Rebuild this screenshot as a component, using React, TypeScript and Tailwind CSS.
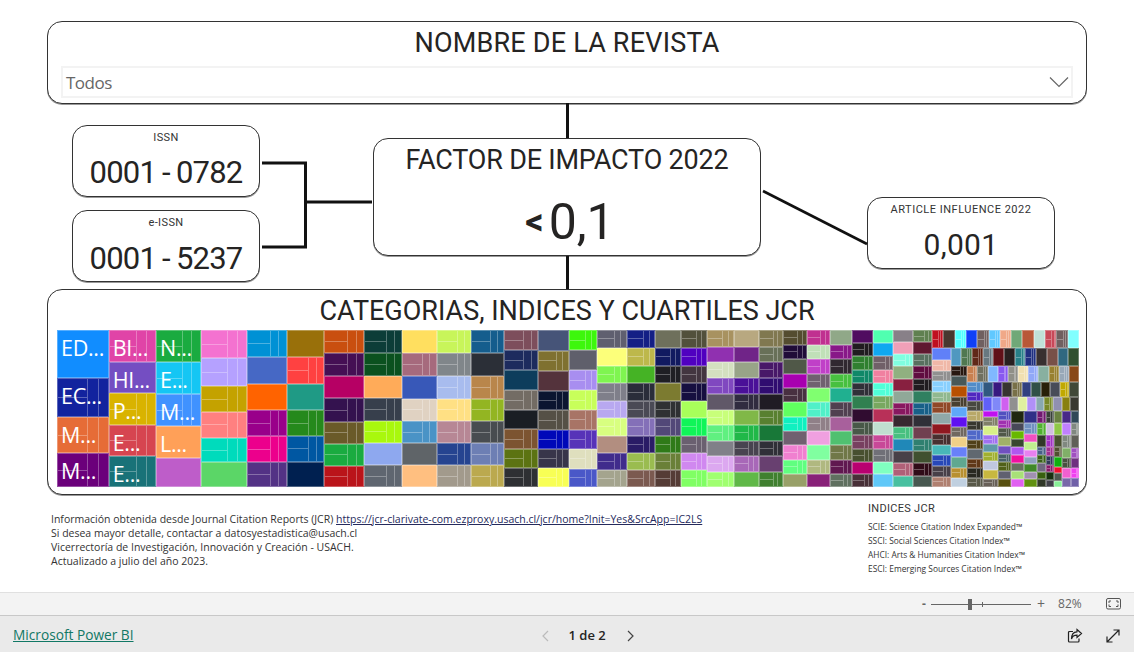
import React from "react";

type Node = { size: number; dir?: "row" | "col"; kids?: Node[]; color?: string; split?: boolean; label?: string };

// "145:118dff.|ED..." -> size:colour, "." = no inner lines, "|x" = label
const parse = (text: string): Node[] =>
  text.split(" ").map((part) => {
    const [body, label] = part.split("|");
    const hasSize = body.includes(":");
    const size = hasSize ? Number(body.split(":")[0]) : 1;
    const raw = hasSize ? body.split(":")[1] : body;
    const plain = raw.endsWith(".");
    return { size, color: "#" + raw.replace(".", ""), split: !plain, label };
  });

const col = (size: number, text: string): Node => ({ size, dir: "col", kids: parse(text) });
const row = (size: number, text: string): Node => ({ size, dir: "row", kids: parse(text) });
const box = (size: number, dir: "row" | "col", ...kids: Node[]): Node => ({ size, dir, kids });

const treemap: Node = box(3066, "row",
  col(155, "145:118dff.|ED... 118:12239e|EC... 106:e66c37|M... 101:6b007b|M..."),
  col(142, "97:e044a7|BI... 93:744ec2.|HI... 95:d9b300|P... 93:d64550|E... 92:197278|E..."),
  col(135, "97:1aab40|N... 96:15c6f4|E... 95:4092ff|M... 94:ffa058.|L... 88:be5dc9."),
  col(137, "85:f472d0 84:b5a1ff 78:c4a200 76:ff8080 74:00dbbc 73:5bd667."),
  col(121, "82:0091d5 80:4668c5. 79:ff6300. 78:99008a 76:ec008c 75:533285"),
  col(112, "80:99700a. 81:ff4141 80:1f9a85. 77:25891c 76:0057a2 76:002050."),
  col(120, "70:c94f0f 68:450f54 67:b60064. 70:34124f 66:6a5a29 65:1aab40 64:ba141a"),
  col(112, "68:0c3d38 69:0b511f 68:ffab59. 67:373f4c 66:a9f80d 67:8ea8ef. 65:5f6670"),
  col(106, "70:ffdf5f. 67:a66a7d 68:3858b8. 67:e0d2c2 66:4a93c6 65:5f6468. 65:ffbf80."),
  col(102, "68:c8f55a 69:80868a 68:a8bcee 67:ffe084 66:b78795 65:264490 65:a29a8c"),
  col(98, "68:155d8d 69:2b2f37. 68:b9864b 67:93b522 66:484c50 65:6d7fb4 65:bba94f"),
  col(103, "60:7d4e5c 61:1d2b5e 59:0d3d5c. 60:736c64 58:1a1e24. 58:7c5431 58:5c7312 56:2e3033"),
  col(93, "62:465478. 61:7f7130 60:54333c. 58:0b1530 60:555046 57:0008b8 56:38354a 56:f8ff55"),
  col(85, "61:3df70c 60:5f5f6b. 59:a88ef0 60:c8ff5a 59:a87466 58:5733b8 58:dfdfbe 55:4a58c8"),
  col(89, "53:5f5f6f 54:fcff7a. 53:7ff550 52:7f7f8a 52:b8a8f0 53:d8ff80 51:b28e80. 51:402c8c 51:a4a48e"),
  col(83, "53:141f85 54:bdb84b 53:45b325. 52:2a2d3a 52:4a4a55 53:8470b8 51:2a1c66 51:9abc50 51:7b5a50"),
  col(79, "53:6e705c. 54:111a60 53:1f1f24 52:7c7b30. 52:2f3133 53:524878 51:2f7a18 51:6a8038 51:553c36"),
  col(77, "53:52503c 54:5000c0 53:433640 52:160f40 52:a8ff5a. 53:10f558 51:6a6070 51:d088f0 51:80ff64"),
  col(82, "50:a89260 45:9030b0. 50:d4e0c0 48:8048c0 46:605868. 46:c8ff7a 47:60f080 46:808088. 46:dca8f0 46:a0ff70"),
  col(75, "50:b8a880. 45:702488. 50:98a488. 48:4a1098 46:302c40 46:80b848. 47:20b848 46:484450 46:a868b8 46:60b848."),
  col(71, "50:807850 45:687058 50:481868 48:300c70 46:201c24. 46:588030 47:187838. 46:303038 46:684070. 46:408030"),
  col(73, "44:544c30 44:200c38 44:505848. 44:a800b0. 42:483040 43:60ff60. 43:10f0c0 43:706070. 43:f080d0 41:60ff80 40:98a068."),
  col(70, "44:c03090 44:c0e0b8 44:c040c8 44:706070 42:80ff70. 43:50f0c8 43:908088 43:f0a0e0. 43:80ffa0. 41:b0b880 40:882078."),
  col(64, "44:90a888. 44:881888 44:302830 44:48c040 42:20b090. 43:504050 43:a8609c. 43:50c070. 43:707848 41:601850 40:607060"),
  col(64, "39:500c60. 39:201c20 39:308030 39:108868 39:303038 39:308050. 39:300c30. 39:485848 39:784060 39:485030 37:b80070. 37:483038"),
  col(61, "39:50ffb0. 39:10a8f0. 39:706068 39:f080a0 39:50ffd8 39:78a860 39:b83058. 39:c0e0d0. 39:c84898 39:707078 37:80ffc0. 37:60c8f8."),
  col(60, "36:888088. 36:f0a0b8. 36:80ffe0 36:90b080. 36:882040. 36:90a898. 36:881860 36:382830. 36:48c080 36:2088b8. 36:484048. 36:b06078 34:48c0a0."),
  col(56, "36:608050 36:601830. 36:587060 36:600c40 36:201c20 36:308060. 36:186088 36:303038. 36:704050. 36:308070 36:405030. 36:300c18 34:485850."),
  box(441, "col",
    row(55, "c01020 483830. 50ffff 1040f8. 706060 60c8ff f0a888 70a878. b85838. c0e0d8. c84858 706060 80ffff."),
    box(415, "row",
      col(56, "35:6080f8. 33:f0b8a8 32:909090 32:88d0ff 32:90b890 32:904828 32:90a8a8. 32:901820. 32:483030 32:48b8b8. 32:2848b8 32:484048 31:b08070"),
      box(385, "col",
        row(52, "5098c0. 507850 602818 687880 601018. 282020. 288088 203080 383030. 785048. 306880. 305030."),
        box(363, "row",
          col(50, "31:281810 31:485858. 31:b85000. 30:484030 30:60a8f8. 30:6010f0. 31:706860 31:f0d088. 30:6880f8. 31:60a890. 30:b89030 27:c0d0e0."),
          box(335, "col",
            row(48, "c88050 707060 80b8ff. 8858f0 909088 f0e0b0 90a8f8 88b0a0. 988030 98a8b8 884818."),
            box(315, "row",
              col(48, "30:508cc8 28:5028c0 30:484840 30:b8a868 28:383830 29:5068c8 28:504018 29:606870. 28:603818 28:282820 27:585848"),
              box(287, "col",
                row(45, "305880. 381880. 383430. 787048 304080. 305048. 282008. 484c58. c0a800 404838."),
                row(43, "6060f8. 8088f8. d060f0. 909090. e0f0a0. b090f8. 88a8b0. 788828 9090b0. 888010. 383830."),
                box(227, "row",
                  col(44, "14:c010f0. 28:808068 28:d8f088. 27:a070f0 25:6098a8. 26:a0b030 26:c0c8e0. 28:c8b840. 25:686058"),
                  col(40, "27:5050c0 25:a030b0 25:505848 27:a0b068. 26:7050c0. 24:486068 25:506018 25:606070. 23:585010."),
                  col(38, "37:202810. 25:484858. 25:68b800. 23:384830. 24:b058f0. 23:f010a0. 23:687060. 24:a8e078. 23:e060f0."),
                  col(38, "37:303088. 37:7090c0 23:f050c0. 23:c0f090. 22:e880f0. 20:90a0c0. 22:408828. 20:a090b0. 23:609010."),
                  col(27, "37:701870 37:50b030 38:303828. 25:486088 23:386018 24:706880. 20:386010. 23:303828."),
                  col(25, "37:384038 37:d0c0e0. 38:a030c0 28:a03090 27:303858 20:881868 20:183010. 20:404048."),
                  col(25, "37:688040. 37:90c848. 38:485030. 30:505030 30:10b010. 18:f01030. 20:505850. 17:88f098."),
                  col(27, "37:482888. 37:c080ff. 38:808880 30:80b068. 30:485040 30:f060d0. 25:7868a8."),
                  col(23, "37:304858. 37:808880 38:606058. 30:a050c0 30:703080. 30:f040f0 25:7060a8."),
                ),
              ),
            ),
          ),
        ),
      ),
    ),
  ),
);

const Cell = ({ node }: { node: Node }) => (
  <div
    className="relative min-w-0 min-h-0 flex overflow-hidden border border-white/30"
    style={{ flex: `${node.size} 1 0px`, backgroundColor: node.color }}
  >
    {node.split && (
      <div className="flex w-full">
        <div className="flex flex-col w-[58%]">
          <div className="flex-1 border-b border-white/30" />
          <div className="flex-1" />
        </div>
        <div className="w-[22%] border-l border-white/30" />
        <div className="flex-1 border-l border-white/30" />
      </div>
    )}
    {node.label && (
      <span className="absolute left-[3px] top-[4px] text-[21.5px] leading-[26px] tracking-[-0.3px] text-white whitespace-nowrap font-['Open_Sans',sans-serif]">
        {node.label}
      </span>
    )}
  </div>
);

const Tree = ({ node }: { node: Node }) => {
  if (!node.kids) return <Cell node={node} />;
  return (
    <div
      className={node.dir === "row" ? "flex flex-row min-w-0 min-h-0" : "flex flex-col min-w-0 min-h-0"}
      style={{ flex: `${node.size} 1 0px` }}
    >
      {node.kids.map((kid, i) => (
        <Tree key={i} node={kid} />
      ))}
    </div>
  );
};

const din = "font-['Roboto',sans-serif]";
const card = "bg-white rounded-[15px] border border-[#333] shadow-[0_1px_0_#999]";

const SmallCard = ({ label, value, top }: { label: string; value: string; top: string }) => {
  const [head, tail] = value.split("-");
  return (
    <div className={`${card} h-[72px] w-[188px] flex flex-col items-center`}>
      <p className={`${din} text-[11px] leading-[14px] mt-[5px] text-[#333] tracking-[0.4px]`}>{label}</p>
      <p className={`${din} ${top} text-[31px] leading-[36px] text-[#252423] tracking-[-0.8px]`}>
        {head}
        <span className="mx-[6px]">-</span>
        {tail}
      </p>
    </div>
  );
};

export default function App() {
  return (
    <div className="w-[1134px] h-[652px] flex flex-col bg-white overflow-hidden">
      <div className="relative h-[592px] shrink-0">
        {/* conectores */}
        <svg className="absolute inset-0 pointer-events-none" width="1134" height="592" fill="none" stroke="#111" strokeWidth="3">
          <path d="M567.5 103V138" />
          <path d="M567.5 256V289" />
          <path d="M262 163H305.5V247H262" />
          <path d="M305 202H372" />
          <path d="M763 191L867 244" strokeWidth="2.6" />
        </svg>

        <div className={`${card} mt-[21px] mx-[47px] h-[83px] flex flex-col`}>
          <h1 className={`${din} text-center text-[27px] leading-[32px] mt-[5px] text-[#252423] tracking-[0.2px]`}>NOMBRE DE LA REVISTA</h1>
          <div className="mx-[13px] mt-[7px] h-[32px] border-2 border-[#f3f3f3] flex items-center justify-between pl-[3px] pt-[2px]">
            <span className="font-['Open_Sans',sans-serif] text-[17px] text-[#666] tracking-[-0.5px]">Todos</span>
            <svg width="20" height="12" viewBox="0 0 20 12" fill="none" stroke="#666" strokeWidth="1.2" className="mr-[2px] mb-[2px]">
              <path d="M1 1.5L10 10.5L19 1.5" />
            </svg>
          </div>
        </div>

        <div className="flex h-[185px] items-start">
          <div className="ml-[72px] mt-[21px] flex flex-col gap-[13px]">
            <SmallCard label="ISSN" value="0001-0782" top="mt-[10px]" />
            <SmallCard label="e-ISSN" value="0001-5237" top="mt-[11px]" />
          </div>
          <div className={`${card} ml-[113px] mt-[34px] w-[388px] h-[118px] flex flex-col items-center`}>
            <p className={`${din} text-[27px] leading-[32px] mt-[5px] text-[#252423] tracking-[-0.2px]`}>FACTOR DE IMPACTO 2022</p>
            <p className={`${din} text-[50px] leading-[56px] mt-[18px] ml-[6px] text-[#252423] flex items-center`}>
              <span className="font-bold text-[36px] mr-[5px]">&lt;</span>0,1
            </p>
          </div>
          <div className={`${card} ml-[106px] mt-[93px] w-[188px] h-[72px] flex flex-col items-center`}>
            <p className={`${din} text-[11px] leading-[14px] mt-[5px] text-[#333] tracking-[0.5px]`}>ARTICLE INFLUENCE 2022</p>
            <p className={`${din} text-[30px] leading-[36px] mt-[10px] text-[#252423] tracking-[0.3px]`}>0,001</p>
          </div>
        </div>

        <div className={`${card} mx-[47px] h-[206px] flex flex-col px-[9px]`}>
          <h2 className={`${din} text-center text-[27px] leading-[30px] mt-[6px] text-[#252423]`}>
            CATEGORIAS, INDICES Y CUARTILES JCR
          </h2>
          <div className="mt-[4px] h-[157px] w-[1022px] flex">
            <Tree node={treemap} />
          </div>
        </div>

        <div className="flex items-start">
          <div className="ml-[51px] mt-[17px] text-[10.5px] leading-[14px] text-[#333] font-['Open_Sans',sans-serif] w-[700px]">
            <p>
              Información obtenida desde Journal Citation Reports (JCR){" "}
              <a className="underline text-[#252a5c]" href="#">
                https://jcr-clarivate-com.ezproxy.usach.cl/jcr/home?Init=Yes&amp;SrcApp=IC2LS
              </a>
            </p>
            <p>Si desea mayor detalle, contactar a datosyestadistica@usach.cl</p>
            <p>Vicerrectoría de Investigación, Innovación y Creación - USACH.</p>
            <p>Actualizado a julio del año 2023.</p>
          </div>
          <div className="ml-[117px] mt-[7px] text-[#333]">
            <p className={`${din} text-[11px] leading-[14px] tracking-[0.3px]`}>INDICES JCR</p>
            <div className="mt-[4px] text-[8.4px] leading-[14px] font-['Open_Sans',sans-serif]">
              <p>SCIE: Science Citation Index Expanded™</p>
              <p>SSCI: Social Sciences Citation Index™</p>
              <p>AHCI: Arts &amp; Humanities Citation Index™</p>
              <p>ESCI: Emerging Sources Citation Index™</p>
            </div>
          </div>
        </div>
      </div>

      <div className="h-[23px] bg-[#f3f3f3] border-t border-[#e0e0e0] flex items-center font-['Open_Sans',sans-serif] text-[#666]">
        <span className="ml-[922px] w-[9px] text-[12px] font-bold leading-none">-</span>
        <div className="relative w-[100px] h-[1px] bg-[#666]">
          <div className="absolute left-[37px] top-[-5px] w-[4px] h-[11px] bg-[#666]" />
          <div className="absolute left-[51px] top-[-2px] w-[1px] h-[5px] bg-[#666]" />
        </div>
        <span className="ml-[6px] text-[14px] leading-none">+</span>
        <span className="ml-[13px] text-[12px] leading-none">82%</span>
        <svg className="ml-[24px]" width="15" height="12" viewBox="0 0 15 12" fill="none" stroke="#555" strokeWidth="1">
          <rect x="0.5" y="0.5" width="14" height="10.5" rx="1.5" />
          <path d="M3 5V3H5M10 3H12V5M12 6.5V8.5H10M5 8.5H3V6.5" />
        </svg>
      </div>

      <div className="flex-1 bg-[#eaeaea] border-t border-[#c8c8c8] flex items-center pt-[3px] font-['Open_Sans',sans-serif]">
        <a href="#" className="ml-[13px] text-[13.7px] text-[#117865] underline">Microsoft Power BI</a>
        <svg className="ml-[407px]" width="9" height="12" viewBox="0 0 9 12" fill="none" stroke="#bbb" strokeWidth="1.2">
          <path d="M7 1L2 6L7 11" />
        </svg>
        <span className="ml-[19px] text-[13px] font-semibold text-[#252423]">1 de 2</span>
        <svg className="ml-[20px]" width="9" height="12" viewBox="0 0 9 12" fill="none" stroke="#444" strokeWidth="1.2">
          <path d="M2 1L7 6L2 11" />
        </svg>
        <svg className="ml-[432px]" width="16" height="16" viewBox="0 0 16 16" fill="none" stroke="#222" strokeWidth="1.2">
          <path d="M6 3.5H2.5A1 1 0 0 0 1.5 4.5V13A1 1 0 0 0 2.5 14H11A1 1 0 0 0 12 13V10.5" />
          <path d="M10 1.5L14.5 5.5L10 9.5V7.2C7 7.2 5.2 8.5 4.5 11C4.5 7 6.5 4 10 3.8Z" />
        </svg>
        <svg className="ml-[23px]" width="14" height="14" viewBox="0 0 14 14" fill="none" stroke="#222" strokeWidth="1.2">
          <path d="M1 13L13 1M7.5 1H13V6.5M1 7.5V13H6.5" />
        </svg>
      </div>
    </div>
  );
}
